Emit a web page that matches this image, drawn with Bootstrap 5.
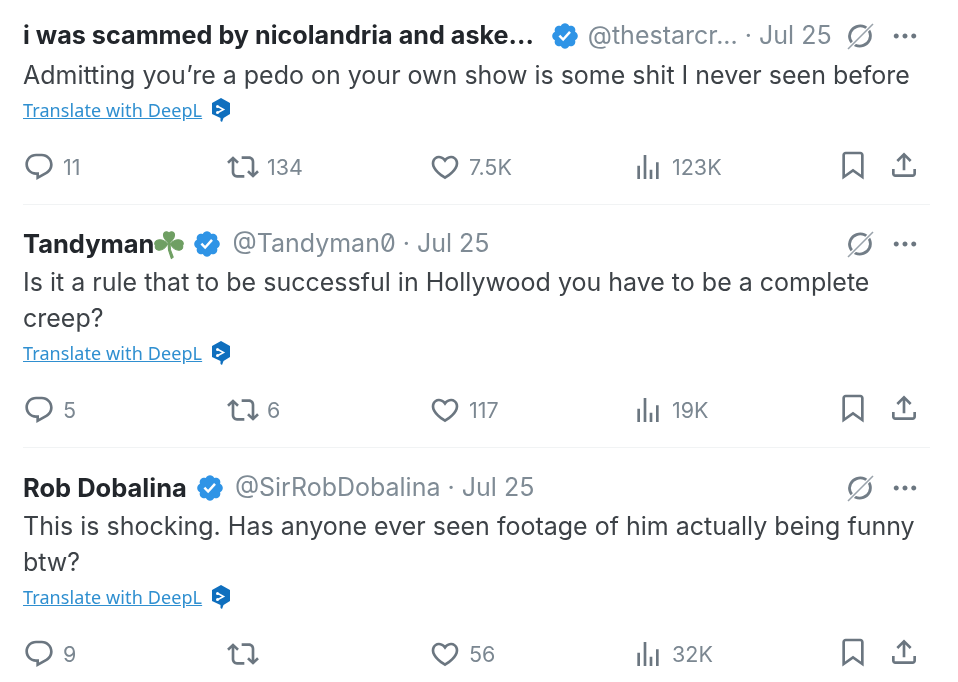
<!DOCTYPE html>
<html lang="en">
<head>
<meta charset="utf-8">
<title>Replies</title>
<link href="https://cdn.jsdelivr.net/npm/bootstrap@5.3.0/dist/css/bootstrap.min.css" rel="stylesheet">
<style>
body{background:#fff;font-family:Inter,Roboto,sans-serif;overflow:hidden}
.feed{width:907px;margin-left:23px;padding-top:18px;filter:blur(.35px)}
.tweet{border-bottom:1.5px solid #f1f3f4;height:187px;margin-bottom:21px}
.tweet.two{height:222px;margin-bottom:22px}
.tweet.two .body-text{margin-top:2px}
.tweet.last{border:0}
.head{height:36px}
.who{font-weight:700;font-size:25.5px;color:#22262b;white-space:nowrap}
.who-long{font-size:25.2px}
.handle{font-size:25px;color:#7f8b95;white-space:nowrap}
.hgap{margin-left:10px}
.zero{font-feature-settings:"zero" 1;font-variant-numeric:slashed-zero}
.body-text{font-size:25px;line-height:36px;color:#3d4247;margin:3px 0 0;width:895px}
.xlate{font-family:"Noto Sans",sans-serif;font-size:18px;line-height:26px;color:#2f8fd0;text-decoration:underline;letter-spacing:.1px}
.xrow{height:34px}
.acts{display:grid;grid-template-columns:204px 202px 203px 205px 51px 25px;height:36px;margin-top:22px}
.act{font-size:21.5px;color:#7b8791}
.ic{fill:#6b7680;display:block}
.vb{fill:#2f94e6}
.hd-r{margin-left:auto;width:75px;margin-right:10px}
</style>
</head>
<body>
<svg width="0" height="0" class="position-absolute">
<defs>
<symbol id="i-reply" viewBox="0 0 24 24"><path d="M1.751 10c0-4.42 3.584-8 8.005-8h4.366c4.49 0 8.129 3.64 8.129 8.13 0 2.96-1.607 5.68-4.196 7.11l-8.054 4.46v-3.69h-.067c-4.49.1-8.183-3.51-8.183-8.01zm8.005-6c-3.317 0-6.005 2.69-6.005 6 0 3.37 2.77 6.08 6.138 6.01l.351-.01h1.761v2.3l5.087-2.81c1.951-1.08 3.163-3.13 3.163-5.36 0-3.39-2.744-6.13-6.129-6.13H9.756z"/></symbol>
<symbol id="i-rt" viewBox="0 0 24 24"><path d="M4.5 3.88l4.432 4.14-1.364 1.46L5.5 7.55V16c0 1.1.896 2 2 2H13v2H7.5c-2.209 0-4-1.79-4-4V7.55L1.432 9.48.068 8.02 4.5 3.88zM16.5 6H11V4h5.5c2.209 0 4 1.79 4 4v8.45l2.068-1.93 1.364 1.46-4.432 4.14-4.432-4.14 1.364-1.46 2.068 1.93V8c0-1.1-.896-2-2-2z"/></symbol>
<symbol id="i-like" viewBox="0 0 24 24"><path d="M16.697 5.5c-1.222-.06-2.679.51-3.89 2.16l-.805 1.09-.806-1.09C9.984 6.01 8.526 5.44 7.304 5.5c-1.243.07-2.349.78-2.91 1.91-.552 1.12-.633 2.78.479 4.82 1.074 1.97 3.257 4.27 7.129 6.61 3.87-2.34 6.052-4.64 7.126-6.61 1.111-2.04 1.03-3.7.477-4.82-.561-1.13-1.666-1.84-2.908-1.91zm4.187 7.69c-1.351 2.48-4.001 5.12-8.379 7.67l-.503.3-.504-.3c-4.379-2.55-7.029-5.19-8.382-7.67-1.36-2.5-1.41-4.86-.514-6.67.887-1.79 2.647-2.91 4.601-3.01 1.651-.09 3.368.56 4.798 2.01 1.429-1.45 3.146-2.1 4.796-2.01 1.954.1 3.714 1.22 4.601 3.01.896 1.81.846 4.17-.514 6.67z"/></symbol>
<symbol id="i-views" viewBox="0 0 24 24"><path d="M8.75 21V3h2v18h-2zM18 21V8.5h2V21h-2zM4 21l.004-10h2L6 21H4zm9.248 0v-7h2v7h-2z"/></symbol>
<symbol id="i-mark" viewBox="0 0 24 24"><path d="M4 4.5C4 3.12 5.119 2 6.5 2h11C18.881 2 20 3.12 20 4.5v18.44l-8-5.71-8 5.71V4.5zM6.5 4c-.276 0-.5.22-.5.5v14.56l6-4.29 6 4.29V4.5c0-.28-.224-.5-.5-.5h-11z"/></symbol>
<symbol id="i-share" viewBox="0 0 24 24"><path d="M12 2.59l5.7 5.7-1.41 1.42L13 6.41V16h-2V6.41l-3.3 3.3-1.41-1.42L12 2.59zM21 15l-.02 3.51c0 1.38-1.12 2.49-2.5 2.49H5.5C4.11 21 3 19.88 3 18.5V15h2v3.5c0 .28.22.5.5.5h12.98c.28 0 .5-.22.5-.5L19 15h2z"/></symbol>
<symbol id="i-ok" viewBox="0 0 24 24"><path d="M22.25 12c0-1.43-.88-2.67-2.19-3.34.46-1.39.2-2.9-.81-3.91s-2.52-1.27-3.91-.81c-.66-1.31-1.91-2.19-3.34-2.19s-2.67.88-3.33 2.19c-1.4-.46-2.91-.2-3.92.81s-1.26 2.52-.8 3.91c-1.31.67-2.2 1.91-2.2 3.34s.89 2.67 2.2 3.34c-.46 1.39-.21 2.9.8 3.91s2.52 1.26 3.91.81c.67 1.31 1.91 2.19 3.34 2.19s2.68-.88 3.34-2.19c1.39.45 2.9.2 3.91-.81s1.27-2.52.81-3.91c1.31-.67 2.19-1.91 2.19-3.34zm-11.71 4.2L6.8 12.46l1.41-1.42 2.26 2.26 4.8-5.23 1.47 1.36-6.2 6.77z"/></symbol>
<symbol id="i-more" viewBox="0 0 24 24"><path d="M3 12c0-1.1.9-2 2-2s2 .9 2 2-.9 2-2 2-2-.9-2-2zm9 2c1.1 0 2-.9 2-2s-.9-2-2-2-2 .9-2 2 .9 2 2 2zm7 0c1.1 0 2-.9 2-2s-.9-2-2-2-2 .9-2 2 .9 2 2 2z"/></symbol>
<symbol id="i-grok" viewBox="0 0 30 30"><ellipse cx="15" cy="15" rx="10.500" ry="10" fill="none" stroke="#727d87" stroke-width="2.800" transform="rotate(-20 15 15)"/><path d="M2 29 29 2" stroke="#fff" stroke-width="4"/><path d="M3 28 28 3" stroke="#9aa3ab" stroke-width="1.600"/></symbol>
<symbol id="i-deepl" viewBox="0 0 22 26"><path d="M11 1 20 6v11l-6.500 4-1.500 4-1.500-1V21L2 17V6z" fill="#0f6fbe"/><path d="M8 9.500 13.500 12.500 8 15.500" fill="none" stroke="#fff" stroke-width="1.600"/><circle cx="7.500" cy="9.500" r="1.500" fill="#fff"/><circle cx="7.500" cy="15.500" r="1.500" fill="#fff"/></symbol>
<symbol id="i-clover" viewBox="0 0 32 32"><g fill="#6f9f63" stroke="#6f9f63" stroke-width="1.200" stroke-linejoin="round"><path d="M16 15C11 11 9 7.500 10.500 4.500 11.500 2.500 15 2.500 16 4.500 17 2.500 20.500 2.500 21.500 4.500 23 7.500 21 11 16 15z"/><path d="M14.500 16C11 11.500 6 10.500 2.500 12.500 0 14 .5 17 2 17.500.5 19 1.500 22 4.500 22.500 8 23 12 20.500 14.500 16z"/><path d="M17.500 16C21 11.500 26 10.500 29.500 12.500 32 14 31.500 17 30 17.500 31.500 19 30.500 22 27.500 22.500 24 23 20 20.500 17.500 16z"/><path d="M15 14h2l.5 8 3 8-2 1.500-3-9z"/></g></symbol>
</defs>
</svg>

<main class="feed">

<article class="tweet">
  <div class="head d-flex align-items-center">
    <span class="who who-long">i was scammed by nicolandria and aske...</span>
    <svg class="vb ms-3" width="30" height="30"><use href="#i-ok"/></svg>
    <span class="handle ms-2">@thestarcr... · Jul 25</span>
    <div class="hd-r d-flex align-items-center justify-content-between">
      <svg width="30" height="30"><use href="#i-grok"/></svg>
      <svg class="ic" width="30" height="30"><use href="#i-more"/></svg>
    </div>
  </div>
  <p class="body-text">Admitting you’re a pedo on your own show is some shit I never seen before</p>
  <div class="xrow d-flex align-items-center gap-2"><span class="xlate">Translate with DeepL</span><svg width="22" height="26"><use href="#i-deepl"/></svg></div>
  <div class="acts">
    <div class="d-flex align-items-center gap-2"><svg class="ic" width="32" height="32"><use href="#i-reply"/></svg><span class="act">11</span></div>
    <div class="d-flex align-items-center gap-2"><svg class="ic" width="32" height="32"><use href="#i-rt"/></svg><span class="act">134</span></div>
    <div class="d-flex align-items-center gap-2"><svg class="ic" width="32" height="32"><use href="#i-like"/></svg><span class="act">7.5K</span></div>
    <div class="d-flex align-items-center gap-2"><svg class="ic" width="32" height="32"><use href="#i-views"/></svg><span class="act">123K</span></div>
    <svg class="ic" width="32" height="32"><use href="#i-mark"/></svg>
    <svg class="ic" width="32" height="32"><use href="#i-share"/></svg>
  </div>
</article>

<article class="tweet two">
  <div class="head d-flex align-items-center">
    <span class="who">Tandyman</span>
    <svg width="30" height="32"><use href="#i-clover"/></svg>
    <svg class="vb ms-2" width="30" height="30"><use href="#i-ok"/></svg>
    <span class="handle hgap">@Tandyman<span class="zero">0</span> · Jul 25</span>
    <div class="hd-r d-flex align-items-center justify-content-between">
      <svg width="30" height="30"><use href="#i-grok"/></svg>
      <svg class="ic" width="30" height="30"><use href="#i-more"/></svg>
    </div>
  </div>
  <p class="body-text">Is it a rule that to be successful in Hollywood you have to be a complete creep?</p>
  <div class="xrow d-flex align-items-center gap-2"><span class="xlate">Translate with DeepL</span><svg width="22" height="26"><use href="#i-deepl"/></svg></div>
  <div class="acts">
    <div class="d-flex align-items-center gap-2"><svg class="ic" width="32" height="32"><use href="#i-reply"/></svg><span class="act">5</span></div>
    <div class="d-flex align-items-center gap-2"><svg class="ic" width="32" height="32"><use href="#i-rt"/></svg><span class="act">6</span></div>
    <div class="d-flex align-items-center gap-2"><svg class="ic" width="32" height="32"><use href="#i-like"/></svg><span class="act">117</span></div>
    <div class="d-flex align-items-center gap-2"><svg class="ic" width="32" height="32"><use href="#i-views"/></svg><span class="act">19K</span></div>
    <svg class="ic" width="32" height="32"><use href="#i-mark"/></svg>
    <svg class="ic" width="32" height="32"><use href="#i-share"/></svg>
  </div>
</article>

<article class="tweet two last">
  <div class="head d-flex align-items-center">
    <span class="who">Rob Dobalina</span>
    <svg class="vb ms-2" width="30" height="30"><use href="#i-ok"/></svg>
    <span class="handle hgap">@SirRobDobalina · Jul 25</span>
    <div class="hd-r d-flex align-items-center justify-content-between">
      <svg width="30" height="30"><use href="#i-grok"/></svg>
      <svg class="ic" width="30" height="30"><use href="#i-more"/></svg>
    </div>
  </div>
  <p class="body-text">This is shocking. Has anyone ever seen footage of him actually being funny btw?</p>
  <div class="xrow d-flex align-items-center gap-2"><span class="xlate">Translate with DeepL</span><svg width="22" height="26"><use href="#i-deepl"/></svg></div>
  <div class="acts">
    <div class="d-flex align-items-center gap-2"><svg class="ic" width="32" height="32"><use href="#i-reply"/></svg><span class="act">9</span></div>
    <div class="d-flex align-items-center gap-2"><svg class="ic" width="32" height="32"><use href="#i-rt"/></svg></div>
    <div class="d-flex align-items-center gap-2"><svg class="ic" width="32" height="32"><use href="#i-like"/></svg><span class="act">56</span></div>
    <div class="d-flex align-items-center gap-2"><svg class="ic" width="32" height="32"><use href="#i-views"/></svg><span class="act">32K</span></div>
    <svg class="ic" width="32" height="32"><use href="#i-mark"/></svg>
    <svg class="ic" width="32" height="32"><use href="#i-share"/></svg>
  </div>
</article>

</main>
<script src="https://cdn.jsdelivr.net/npm/bootstrap@5.3.0/dist/js/bootstrap.bundle.min.js"></script>
</body>
</html>
